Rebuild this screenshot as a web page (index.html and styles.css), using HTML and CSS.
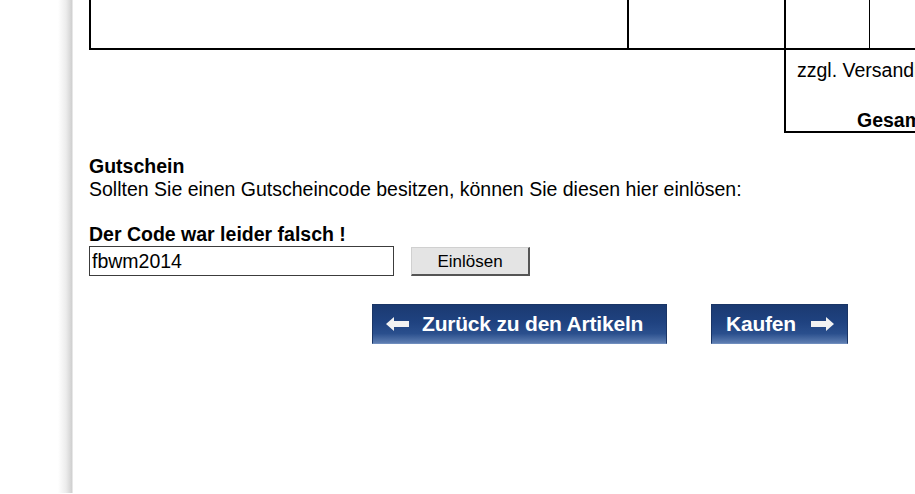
FILE: index.html
```html
<!DOCTYPE html>
<html lang="de">
<head>
<meta charset="utf-8">
<title>Warenkorb</title>
<link rel="stylesheet" href="styles.css">
</head>
<body>
<div class="page">
  <div class="shadow"></div>
  <main class="content">
    <div class="cart-row">
      <div class="cell c1"></div>
      <div class="cell c2"></div>
      <div class="cell c3"></div>
      <div class="cell c4"></div>
    </div>
    <div class="totals">
      <div class="tot-line">zzgl. Versandkosten</div>
      <div class="tot-line tot-sum">Gesamtsumme</div>
    </div>

    <section class="voucher">
      <div class="v-title">Gutschein</div>
      <div class="v-text">Sollten Sie einen Gutscheincode besitzen, können Sie diesen hier einlösen:</div>
      <div class="v-error">Der Code war leider falsch !</div>
      <form class="v-form" onsubmit="return false">
        <input class="v-input" type="text" value="fbwm2014">
        <button class="v-btn" type="button">Einlösen</button>
      </form>
    </section>

    <div class="nav-buttons">
      <a class="nav-btn back" href="#">
        <svg class="arrow" width="24" height="14" viewBox="0 0 24 14"><polygon points="0,7 8,0 8,4 23,4 23,10 8,10 8,14" fill="#f2f2f2"/></svg>
        <span>Zurück zu den Artikeln</span>
      </a>
      <a class="nav-btn buy" href="#">
        <span>Kaufen</span>
        <svg class="arrow" width="24" height="14" viewBox="0 0 24 14"><polygon points="24,7 16,0 16,4 1,4 1,10 16,10 16,14" fill="#f2f2f2"/></svg>
      </a>
    </div>
  </main>
</div>
</body>
</html>
```

FILE: styles.css
```css
html, body {
  margin: 0;
  padding: 0;
  background: #ffffff;
  overflow: hidden;
}
body {
  font-family: "Liberation Sans", Arial, sans-serif;
  font-size: 19.5px;
  color: #000;
}
.page {
  display: flex;
  min-height: 494px;
  height: 494px;
}
.shadow {
  width: 73px;
  flex: 0 0 73px;
  height: 493px;
  background: linear-gradient(to right, #ffffff 0px, #ffffff 58px, #ececec 66px, #d4d4d4 71px, #cfcfcf 72px, #ffffff 73px);
}
.content {
  flex: 1 1 auto;
  padding-left: 16px;
  min-width: 0;
}
.cart-row {
  display: grid;
  grid-template-columns: 536px 157px 85px 200px;
  height: 48px;
  border-left: 2px solid #000;
  border-bottom: 2px solid #000;
  width: 1000px;
}
.c2, .c3 { border-left: 2px solid #000; }
.c4 { border-left: 1px solid #000; }
.totals {
  margin-left: 695px;
  width: 300px;
  height: 83px;
  border-left: 2px solid #000;
  border-bottom: 2px solid #000;
  box-sizing: border-box;
  padding: 10px 0 0 11px;
}
.tot-line {
  height: 50px;
  line-height: 21px;
  white-space: nowrap;
}
.tot-sum {
  font-weight: bold;
  padding-left: 60px;
  height: auto;
}
.voucher {
  padding-top: 22px;
  line-height: 23px;
}
.v-title { font-weight: bold; }
.v-error {
  font-weight: bold;
  margin-top: 22px;
}
.v-form {
  display: flex;
  align-items: center;
  gap: 17px;
  margin: 0;
}
.v-input {
  width: 305px;
  height: 30px;
  box-sizing: border-box;
  border: 1px solid #3c3c3c;
  padding: 0 2px;
  font-family: "Liberation Sans", Arial, sans-serif;
  font-size: 19.5px;
  color: #000;
  margin: 0;
}
.v-btn {
  width: 119px;
  height: 29px;
  box-sizing: border-box;
  background: #e4e4e4;
  border: 1px solid #d0d0d0;
  border-right: 2px solid #555;
  border-bottom: 2px solid #555;
  font-family: "Liberation Sans", Arial, sans-serif;
  font-size: 17px;
  color: #000;
  padding: 2px 0 0;
  margin: 0;
}
.nav-buttons {
  display: flex;
  gap: 44px;
  margin: 28px 0 0 283px;
}
.nav-btn {
  display: flex;
  align-items: center;
  height: 40px;
  box-sizing: border-box;
  background: linear-gradient(to bottom, #1b3a71 0%, #1f4280 45%, #2a4f8d 75%, #5d7db1 100%);
  border: 1px solid #1a3566;
  border-bottom-color: #6f8dbd;
  color: #ffffff;
  font-weight: bold;
  font-size: 21px;
  text-decoration: none;
  letter-spacing: -0.2px;
}
.nav-btn.back {
  width: 295px;
  padding-left: 13px;
  gap: 12px;
}
.nav-btn.buy {
  width: 137px;
  padding-left: 14px;
  gap: 14px;
}
.arrow { flex: 0 0 auto; }
```
